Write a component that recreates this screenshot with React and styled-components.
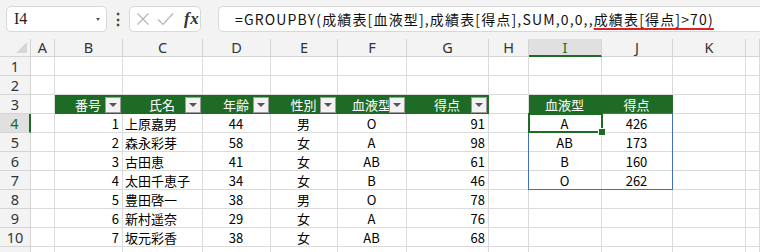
import React from 'react';
import styled, { createGlobalStyle } from 'styled-components';

const GlobalStyle = createGlobalStyle`
  html, body {
    margin: 0;
    padding: 0;
    background: #ffffff;
    overflow: hidden;
  }
  * { box-sizing: border-box; }
`;

const GREEN = '#1e6b26';
const LINE = '#dadada';

const COLS = ['A', 'B', 'C', 'D', 'E', 'F', 'G', 'H', 'I', 'J', 'K', ''];
const WIDTHS = '31px 24px 68px 80px 68px 67px 69px 82px 40px 73px 71px 73px 1fr';

const scores = [
    [1, '上原嘉男', 44, '男', 'O', 91],
    [2, '森永彩芽', 58, '女', 'A', 98],
    [3, '古田恵', 41, '女', 'AB', 61],
    [4, '太田千恵子', 34, '女', 'B', 46],
    [5, '豊田啓一', 38, '男', 'O', 78],
    [6, '新村遥奈', 29, '女', 'A', 76],
    [7, '坂元彩香', 38, '女', 'AB', 68],
];

const grouped = [['A', 426], ['AB', 173], ['B', 160], ['O', 262]];

// alignment of each column of the first table (B..G)
const ALIGN = ['right', 'left', 'center', 'center', 'center', 'right'];
const HEAD1 = ['番号', '氏名', '年齢', '性別', '血液型', '得点'];

const buildRow = (r) => {
    // returns 12 cells (A..L) for sheet row r
    const cells = Array.from({ length: 12 }, () => ({ text: '', align: 'left', head: false }));
    if (r === 3) {
        HEAD1.forEach((t, i) => { cells[1 + i] = { text: t, align: 'center', head: true, filter: true }; });
        cells[8] = { text: '血液型', align: 'center', head: true };
        cells[9] = { text: '得点', align: 'center', head: true };
    }
    if (r >= 4 && r <= 10) {
        scores[r - 4].forEach((v, i) => { cells[1 + i] = { text: v, align: ALIGN[i], head: false }; });
    }
    if (r >= 4 && r <= 7) {
        cells[8] = { text: grouped[r - 4][0], align: 'center', head: false };
        cells[9] = { text: grouped[r - 4][1], align: 'center', head: false };
    }
    return cells;
};

const App = () => {
    const rows = Array.from({ length: 10 }, (_, i) => i + 1);
    return (
        <>
            <GlobalStyle />
            <Toolbar>
                <NameBox>
                    <span>I4</span>
                    <Caret />
                </NameBox>
                <Dots>⋮</Dots>
                <FxBox>
                    <svg width="14" height="14" viewBox="0 0 14 14">
                        <path d="M1.5 1.5 L12.5 12.5 M12.5 1.5 L1.5 12.5" stroke="#b4b4b4" strokeWidth="1.2" fill="none" />
                    </svg>
                    <svg width="17" height="14" viewBox="0 0 17 14">
                        <path d="M1 7.5 L6 12.5 L16 1.5" stroke="#b4b4b4" strokeWidth="1.2" fill="none" />
                    </svg>
                    <Fx>fx</Fx>
                </FxBox>
                <Formula>
                    =GROUPBY(成績表[血液型],成績表[得点],SUM,0,0,,<Squiggle>成績表[得点]&gt;70)</Squiggle>
                </Formula>
            </Toolbar>

            <Sheet>
                <Corner><CornerMark /></Corner>
                {COLS.map((c, i) => (
                    <ColHead key={'h' + i} $active={c === 'I'}>{c}</ColHead>
                ))}
                {rows.map(r => (
                    <React.Fragment key={r}>
                        <RowHead $active={r === 4}>{r}</RowHead>
                        {buildRow(r).map((cell, i) => (
                            <Cell key={i} $align={cell.align} $head={cell.head}>
                                {cell.text}
                                {cell.filter && <FilterButton><Arrow /></FilterButton>}
                            </Cell>
                        ))}
                    </React.Fragment>
                ))}
                {/* the top edge of row 11, its number is below the frame */}
                <RowHead />
                {COLS.map((c, i) => <Cell key={'e' + i} />)}
                <SpillRange />
                <Selection><Handle /></Selection>
            </Sheet>
        </>
    );
};

export default App;

const Toolbar = styled.div`
    height: 39px;
    background: #f3f3f3;
    display: flex;
    align-items: center;
    padding-left: 6px;
    padding-bottom: 1px;
    font-family: "Noto Sans", "Noto Sans CJK JP", sans-serif;
`;

const NameBox = styled.div`
    width: 101px;
    height: 26px;
    background: #ffffff;
    border: 1px solid #d8d8d8;
    border-radius: 5px;
    display: flex;
    align-items: center;
    justify-content: space-between;
    padding: 0 6px 0 7px;
    font-size: 15px;
    color: #222;
    span {
        font-family: "Liberation Serif", serif;
        font-size: 16px;
    }
`;

const Caret = styled.div`
    width: 0;
    height: 0;
    border-left: 2px solid transparent;
    border-right: 2px solid transparent;
    border-top: 3px solid #555;
    margin-top: 1px;
`;

const Dots = styled.div`
    width: 22px;
    text-align: center;
    font-size: 16px;
    font-weight: bold;
    color: #444;
`;

const FxBox = styled.div`
    width: 72px;
    height: 26px;
    background: #ffffff;
    border: 1px solid #d8d8d8;
    border-radius: 5px;
    display: flex;
    align-items: center;
    padding-left: 6px;
    gap: 7px;
    svg { display: block; }
`;

const Fx = styled.span`
    font-family: "Liberation Serif", "DejaVu Serif", serif;
    font-style: italic;
    font-weight: bold;
    font-size: 17px;
    color: #333;
    margin-left: 3px;
    letter-spacing: 0.5px;
`;

const Formula = styled.div`
    flex: 1;
    height: 26px;
    margin-left: 17px;
    margin-right: -8px;
    background: #ffffff;
    border: 1px solid #d8d8d8;
    border-radius: 5px;
    display: flex;
    align-items: center;
    padding-left: 16px;
    font-family: "Noto Sans CJK JP", sans-serif;
    font-size: 14px;
    letter-spacing: 1.15px;
    color: #111;
    white-space: nowrap;
`;

const Squiggle = styled.span`
    text-decoration: underline;
    text-decoration-color: #e02020;
    text-decoration-thickness: 1.5px;
    text-underline-offset: 3px;
`;

const Sheet = styled.div`
    position: relative;
    display: grid;
    grid-template-columns: ${WIDTHS};
    grid-template-rows: 18px repeat(11, 19px);
    font-family: "Noto Sans CJK JP", sans-serif;
    font-size: 13px;
    color: #000;
`;

const Corner = styled.div`
    position: relative;
    background: #f3f3f3;
    border-right: 1px solid #d4d4d4;
    border-bottom: 1px solid #d4d4d4;
`;

const CornerMark = styled.div`
    position: absolute;
    right: 3px;
    bottom: 3px;
    width: 0;
    height: 0;
    border-left: 11px solid transparent;
    border-bottom: 11px solid #d6d6d6;
`;

const ColHead = styled.div`
    background: ${({ $active }) => ($active ? '#e0e0e0' : '#f3f3f3')};
    border-right: 1px solid #d4d4d4;
    border-bottom: ${({ $active }) => ($active ? `2px solid ${GREEN}` : '1px solid #d4d4d4')};
    color: ${({ $active }) => ($active ? GREEN : '#333')};
    font-family: "Noto Sans", sans-serif;
    font-size: 14.5px;
    display: flex;
    align-items: center;
    justify-content: center;
    line-height: 1;
`;

const RowHead = styled.div`
    background: ${({ $active }) => ($active ? '#e0e0e0' : '#f3f3f3')};
    border-right: ${({ $active }) => ($active ? `2px solid ${GREEN}` : '1px solid #d4d4d4')};
    border-bottom: 1px solid #d4d4d4;
    color: ${({ $active }) => ($active ? GREEN : '#333')};
    font-family: "Noto Sans", sans-serif;
    font-size: 14.5px;
    display: flex;
    align-items: center;
    justify-content: center;
    line-height: 1;
`;

const Cell = styled.div`
    position: relative;
    border-right: 1px solid ${({ $head }) => ($head ? GREEN : LINE)};
    border-bottom: 1px solid ${({ $head }) => ($head ? GREEN : LINE)};
    background: ${({ $head }) => ($head ? GREEN : '#ffffff')};
    color: ${({ $head }) => ($head ? '#ffffff' : '#000')};
    display: flex;
    align-items: center;
    justify-content: ${({ $align }) => ($align === 'right' ? 'flex-end' : $align === 'center' ? 'center' : 'flex-start')};
    padding: 0 3px 0 2px;
    white-space: nowrap;
    overflow: visible;
    line-height: 1;
`;

const FilterButton = styled.div`
    position: absolute;
    right: 1px;
    top: 2px;
    width: 16px;
    height: 16px;
    background: #f2f2f2;
    border: 1px solid #9c9c9c;
    display: flex;
    align-items: center;
    justify-content: center;
`;

const Arrow = styled.div`
    width: 0;
    height: 0;
    border-left: 4px solid transparent;
    border-right: 4px solid transparent;
    border-top: 4px solid #555;
`;

const SpillRange = styled.div`
    position: absolute;
    grid-column: 10 / 12;
    grid-row: 5 / 9;
    top: -1px;
    left: -1px;
    right: 0;
    bottom: 0;
    border: 1px solid #3d6fc6;
    pointer-events: none;
`;

const Selection = styled.div`
    position: absolute;
    grid-column: 10 / 11;
    grid-row: 5 / 6;
    top: -1px;
    left: -1px;
    right: -1px;
    bottom: 0;
    border: 2px solid ${GREEN};
    pointer-events: none;
`;

const Handle = styled.div`
    position: absolute;
    right: -4px;
    bottom: -4px;
    width: 6px;
    height: 6px;
    background: ${GREEN};
    outline: 1px solid #ffffff;
`;
